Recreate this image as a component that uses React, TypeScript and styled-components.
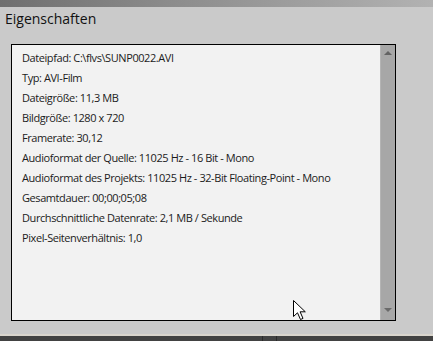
import React from 'react';
import styled, { createGlobalStyle } from 'styled-components';

const GlobalStyle = createGlobalStyle`
   html, body {
      margin: 0;
      padding: 0;
      background: #cacaca;
   }
   #root {
      width: 433px;
      height: 341px;
      overflow: hidden;
   }
`;

const properties: string[] = [
   'Dateipfad: C:\\flvs\\SUNP0022.AVI',
   'Typ: AVI-Film',
   'Dateigröße: 11,3 MB',
   'Bildgröße: 1280 x 720',
   'Framerate: 30,12',
   'Audioformat der Quelle: 11025 Hz - 16 Bit - Mono',
   'Audioformat des Projekts: 11025 Hz - 32-Bit Floating-Point - Mono',
   'Gesamtdauer: 00;00;05;08',
   'Durchschnittliche Datenrate: 2,1 MB / Sekunde',
   'Pixel-Seitenverhältnis: 1,0',
];

const App = () => {
   return (
      <>
         <GlobalStyle />
         <Window>
            <TopStrip />
            <Title>Eigenschaften</Title>
            <Panel>
               <Content>
                  {properties.map((line, index) => (
                     <Line key={index}>{line}</Line>
                  ))}
               </Content>
               <Scrollbar>
                  <Arrow $dir="up" />
                  <Arrow $dir="down" />
               </Scrollbar>
               <Cursor width="14" height="21" viewBox="0 0 14 21">
                  <path
                     d="M0.5 0.5 L0.5 16.5 L4.5 12.8 L7.5 19.5 L10 18.4 L7.1 11.8 L12.3 11.8 Z"
                     fill="#fff"
                     stroke="#000"
                     strokeWidth="1"
                     strokeLinejoin="miter"
                  />
               </Cursor>
            </Panel>
            <Footer>
               <FooterLine />
               <FooterBar>
                  <Divider />
                  <Divider />
               </FooterBar>
            </Footer>
         </Window>
      </>
   );
};

const Window = styled.div`
   width: 433px;
   height: 341px;
   display: flex;
   flex-direction: column;
   background: #cacaca;
   font-family: 'Open Sans', 'Liberation Sans', sans-serif;
`;

const TopStrip = styled.div`
   height: 7px;
   flex-shrink: 0;
   background: linear-gradient(to right, #6f6f6f 0%, #8c8c8c 40%, #b2b2b2 100%);
`;

const Title = styled.div`
   height: 24px;
   padding-left: 5px;
   font-size: 14px;
   line-height: 24px;
   color: #111;
`;

const Panel = styled.div`
   position: relative;
   margin: 13px 0 0 11px;
   width: 383px;
   height: 275px;
   display: flex;
   border: 1px solid #000;
   background: #f2f2f2;
`;

const Content = styled.div`
   flex: 1;
   padding: 3px 0 0 10px;
   display: flex;
   flex-direction: column;
`;

const Line = styled.div`
   height: 20px;
   font-size: 11px;
   line-height: 20px;
   letter-spacing: -0.42px;
   color: #1b1b1b;
   white-space: nowrap;
`;

const Scrollbar = styled.div`
   width: 14px;
   display: flex;
   flex-direction: column;
   justify-content: space-between;
   align-items: center;
   padding: 6px 0 8px;
   background: #a7a7a7;
   border-left: 1px solid #b4b4b4;
`;

const Arrow = styled.div<{ $dir: 'up' | 'down' }>`
   width: 0;
   height: 0;
   border-left: 4px solid transparent;
   border-right: 4px solid transparent;
   ${({ $dir }) =>
      $dir === 'up'
         ? 'border-bottom: 4px solid #636363;'
         : 'border-top: 4px solid #6a6a6a;'}
`;

const Cursor = styled.svg`
   position: absolute;
   left: 281px;
   top: 255px;
`;

const Footer = styled.div`
   margin-top: auto;
   display: flex;
   flex-direction: column;
`;

const FooterLine = styled.div`
   height: 2px;
   background: #d9d5cd;
`;

const FooterBar = styled.div`
   height: 5px;
   background: #424242;
   display: flex;
   padding-left: 262px;
   gap: 13px;
`;

const Divider = styled.div`
   width: 1px;
   background: #2a2a2a;
`;

export default App;
